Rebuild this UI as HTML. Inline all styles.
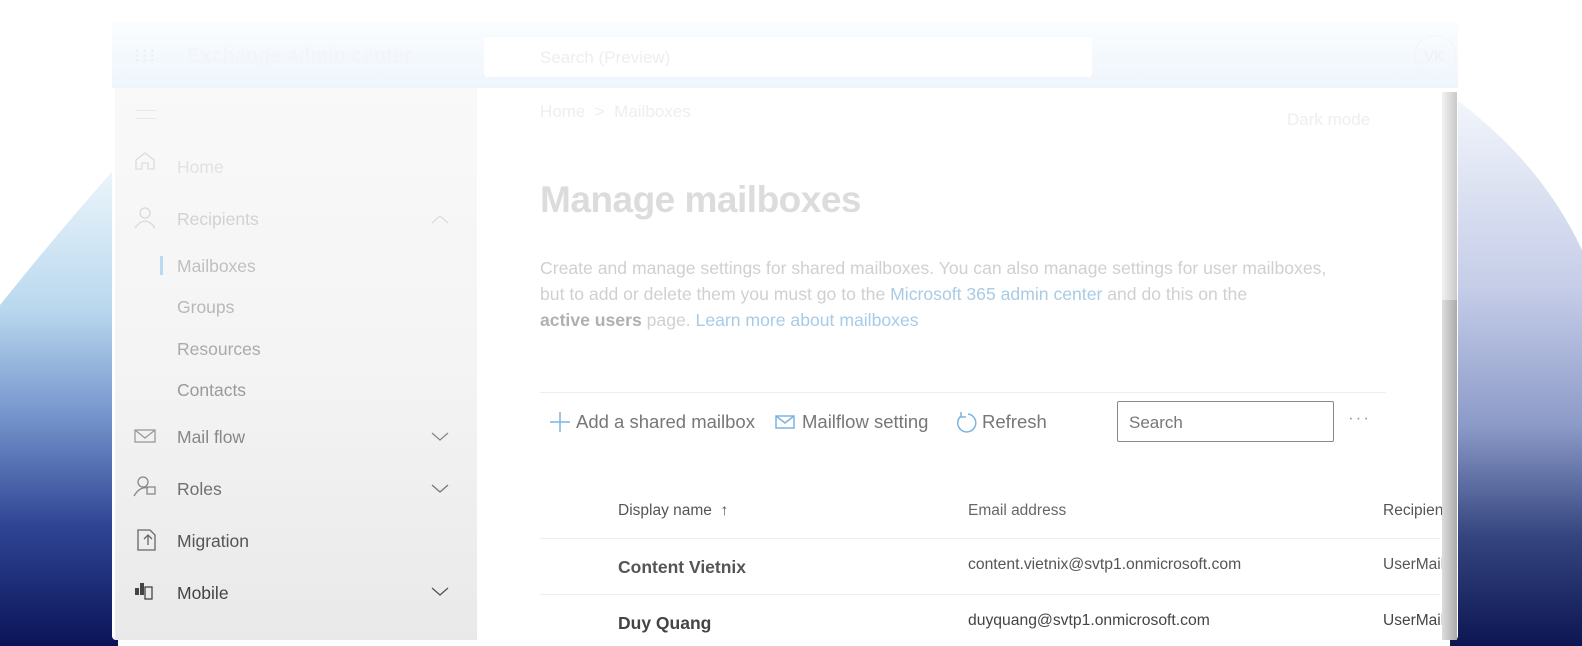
<!DOCTYPE html>
<html><head><meta charset="utf-8"><style>
*{margin:0;padding:0;box-sizing:border-box}
body{width:1582px;height:646px;overflow:hidden;position:relative;background:#fff;font-family:"Liberation Sans",sans-serif}
.abs{position:absolute}
.t{position:absolute;white-space:nowrap}
</style></head><body>
<svg class="abs" style="left:0;top:0" width="1582" height="646">
<defs>
<linearGradient id="lg" x1="0" y1="0" x2="0" y2="1">
<stop offset="0" stop-color="#eef6fb"/><stop offset="0.3" stop-color="#b9d8ee"/><stop offset="0.5" stop-color="#7c9bd0"/><stop offset="0.75" stop-color="#2f4594"/><stop offset="1" stop-color="#0b1458"/></linearGradient>
<linearGradient id="rg" x1="0" y1="0" x2="0" y2="1">
<stop offset="0" stop-color="#f3f6fb"/><stop offset="0.35" stop-color="#c5cde8"/><stop offset="0.6" stop-color="#8c9ac8"/><stop offset="0.8" stop-color="#35457f"/><stop offset="1" stop-color="#0d1652"/></linearGradient>
</defs>
<path d="M0 305 Q60 230 118 165 L118 646 L0 646Z" fill="url(#lg)"/>
<path d="M1450 95 Q1540 160 1582 250 L1582 646 L1450 646Z" fill="url(#rg)"/>
</svg>
<div class="abs" style="left:112px;top:22px;width:1346px;height:618px;background:#fff;border-radius:4px"></div>
<div class="abs" style="left:112px;top:22px;width:1346px;height:66px;background:linear-gradient(#fbfdff,#eef5fc)"></div>
<div class="abs" style="left:115px;top:88px;width:362px;height:552px;background:linear-gradient(#f9f9f9,#f4f4f4 50%,#e9e9e9)"></div>
<div class="abs" style="left:1442px;top:92px;width:15px;height:548px;background:linear-gradient(90deg,#f2f2f2,#c8c8c8)"></div>
<div class="t" style="left:134px;top:46px;color:#e6eef6;font-size:18px;letter-spacing:2px">⁝⁝⁝</div>
<div class="t" style="left:187px;top:45px;color:#f2f6fa;font-size:20px;font-weight:bold">Exchange admin center</div>
<div class="abs" style="left:484px;top:37px;width:608px;height:40px;background:#fff;border-radius:4px"></div>
<div class="t" style="left:540px;top:48px;color:#eceef0;font-size:17px">Search (Preview)</div>
<div class="abs" style="left:1414px;top:35px;width:42px;height:42px;border:1px solid #f2f4f8;border-radius:50%"></div>
<div class="t" style="left:1424px;top:48px;color:#eef0f4;font-size:15px">VK</div>
<div class="abs" style="left:136px;top:110px;width:20px;height:9px;border-top:1px solid #e8e8e8;border-bottom:1px solid #e8e8e8"></div>
<div class="t" style="left:177px;top:157px;color:#e2e2e2;font-size:17.5px">Home</div>
<div class="t" style="left:177px;top:209px;color:#d2d2d2;font-size:17.5px">Recipients</div>
<div class="abs" style="left:160px;top:256px;width:3px;height:19px;background:#bcd8f0"></div>
<div class="t" style="left:177px;top:256px;color:#c0c0c0;font-size:17.5px">Mailboxes</div>
<div class="t" style="left:177px;top:297px;color:#b8b8b8;font-size:17.5px">Groups</div>
<div class="t" style="left:177px;top:339px;color:#aaa;font-size:17.5px">Resources</div>
<div class="t" style="left:177px;top:380px;color:#9a9a9a;font-size:17.5px">Contacts</div>
<div class="t" style="left:177px;top:427px;color:#888;font-size:17.5px">Mail flow</div>
<div class="t" style="left:177px;top:479px;color:#707070;font-size:17.5px">Roles</div>
<div class="t" style="left:177px;top:531px;color:#555;font-size:17.5px">Migration</div>
<div class="t" style="left:177px;top:583px;color:#444;font-size:17.5px">Mobile</div>
<svg class="abs" style="left:130px;top:150px" width="340" height="460" fill="none" stroke-width="1.3">
<path d="M6 19 V10 L15 3 L24 10 V19 H18 V13 H12 V19Z" stroke="#ddd"/>
<circle cx="15" cy="63" r="5" stroke="#d8d8d8"/><path d="M5 78 Q15 64 25 78" stroke="#d8d8d8"/>
<path d="M310 66 L318 73 M310 66 L302 73" stroke="#ddd"/>
<rect x="5" y="280" width="20" height="12" stroke="#999"/><path d="M5 280 L15 288 L25 280" stroke="#999"/>
<circle cx="13" cy="332" r="5" stroke="#888"/><path d="M4 346 Q10 336 18 338" stroke="#888"/><rect x="17" y="337" width="8" height="7" stroke="#888"/>
<path d="M8 380 V400 H25 V385 L20 380Z M18 385 V395 M14 389 L18 385 L22 389" stroke="#666"/>
<rect x="5" y="438" width="4" height="7" fill="#444"/><rect x="10" y="433" width="4" height="12" fill="#444"/><rect x="15" y="437" width="7" height="12" stroke="#444"/>
<path d="M302 283 L310 290 L318 283" stroke="#888"/>
<path d="M302 335 L310 342 L318 335" stroke="#777"/>
<path d="M302 438 L310 445 L318 438" stroke="#555"/>
</svg>
<div class="t" style="left:540px;top:102px;color:#eee;font-size:17px">Home &nbsp;&gt;&nbsp; Mailboxes</div>
<div class="t" style="left:1287px;top:110px;color:#eee;font-size:17px">Dark mode</div>
<div class="t" style="left:540px;top:179px;color:#dcdcdc;font-size:37px;font-weight:bold;letter-spacing:-0.5px">Manage mailboxes</div>
<div class="abs" style="left:540px;top:255px;width:900px;white-space:nowrap;color:#d0d0d0;font-size:17.6px;line-height:26px">Create and manage settings for shared mailboxes. You can also manage settings for user mailboxes,<br>but to add or delete them you must go to the <span style="color:#a8cbe6">Microsoft 365 admin center</span> and do this on the<br><b style="color:#b0b0b0">active users</b> page. <span style="color:#a8cbe6">Learn more about mailboxes</span></div>
<div class="abs" style="left:540px;top:392px;width:846px;height:1px;background:#eee"></div>
<svg class="abs" style="left:548px;top:410px" width="440" height="24" fill="none" stroke="#7fb3df" stroke-width="1.5">
<path d="M12 2 V22 M2 12 H22"/>
<rect x="228" y="6" width="18" height="12"/><path d="M228 6 L237 13 L246 6"/>
<path d="M420 4 A9 9 0 1 1 413 6 M413 2 V7 H418"/>
</svg>
<div class="t" style="left:576px;top:411px;color:#777;font-size:18.5px">Add a shared mailbox</div>
<div class="t" style="left:802px;top:411px;color:#777;font-size:18.5px">Mailflow setting</div>
<div class="t" style="left:982px;top:411px;color:#777;font-size:18.5px">Refresh</div>
<div class="abs" style="left:1117px;top:401px;width:217px;height:41px;border:1px solid #888;border-radius:2px"></div>
<div class="t" style="left:1129px;top:413px;color:#777;font-size:17px">Search</div>
<div class="t" style="left:1348px;top:408px;color:#999;font-size:17px;letter-spacing:2px">···</div>
<div class="t" style="left:618px;top:502px;color:#555;font-size:15.5px">Display name &nbsp;↑</div>
<div class="t" style="left:968px;top:502px;color:#666;font-size:15.5px">Email address</div>
<div class="t" style="left:1383px;top:502px;color:#555;font-size:15.5px">Recipient</div>
<div class="abs" style="left:540px;top:538px;width:900px;height:1px;background:#eee"></div>
<div class="t" style="left:618px;top:557px;color:#555;font-size:17.5px;font-weight:bold">Content Vietnix</div>
<div class="t" style="left:968px;top:556px;color:#555;font-size:15.7px">content.vietnix@svtp1.onmicrosoft.com</div>
<div class="t" style="left:1383px;top:556px;color:#555;font-size:15.5px">UserMailb</div>
<div class="abs" style="left:540px;top:594px;width:900px;height:1px;background:#eee"></div>
<div class="t" style="left:618px;top:613px;color:#444;font-size:17.5px;font-weight:bold">Duy Quang</div>
<div class="t" style="left:968px;top:612px;color:#444;font-size:15.7px">duyquang@svtp1.onmicrosoft.com</div>
<div class="t" style="left:1383px;top:612px;color:#444;font-size:15.5px">UserMailb</div>
<div class="abs" style="left:1442px;top:300px;width:15px;height:340px;background:linear-gradient(90deg,#ddd,#aaa)"></div>
</body></html>
